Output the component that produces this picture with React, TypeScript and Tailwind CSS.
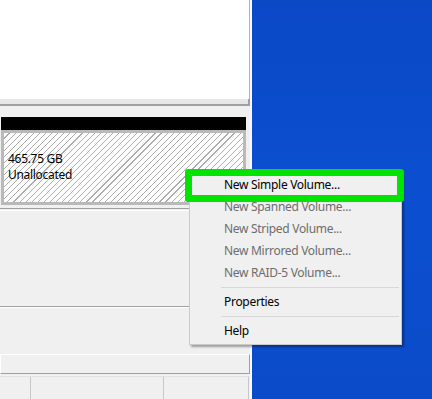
import React from 'react'

const items = [
  { label: 'New Simple Volume...', disabled: false },
  { label: 'New Spanned Volume...', disabled: true },
  { label: 'New Striped Volume...', disabled: true },
  { label: 'New Mirrored Volume...', disabled: true },
  { label: 'New RAID-5 Volume...', disabled: true },
]

const MenuItem = ({ label, disabled }: { label: string; disabled?: boolean }) => (
  <div className={`h-[22px] flex items-center pl-[34px] ${disabled ? 'text-[#6d6d6d]' : 'text-black'}`}>{label}</div>
)

const Separator = () => (
  <div className="h-[7px] flex items-center pl-[31px] pr-[2px]">
    <div className="w-full h-px bg-[#d7d7d7]" />
  </div>
)

const App = () => {
  return (
    <div className="relative w-[432px] h-[399px] flex overflow-hidden font-['Noto_Sans',sans-serif] text-[12px] tracking-[-0.3px]">
      <div className="w-[252px] h-full flex flex-col bg-[#f0f0f0] border-r-2 border-[#fafafa]">
        <div className="h-[99px] bg-white border-r border-[#b0b0b0]" />
        <div className="h-[7px] w-[250px] bg-[#e6e6e6] border-r-2 border-b-2 border-[#a0a0a0]" />
        <div className="h-[11px]" />
        <div className="ml-px w-[245px] h-[13px] bg-black" />
        <div className="ml-px w-[245px] h-[75px] border-[3px] border-[#b9b9b9] bg-white bg-[repeating-linear-gradient(135deg,#ffffff_0px,#ffffff_3.5px,#acacac_3.5px,#acacac_4.3px)] pt-[18px] pl-[4px] leading-[16px] text-black">
          <div>465.75 GB</div>
          <div>Unallocated</div>
        </div>
        <div className="h-[3px]" />
        <div className="w-[250px] h-[3px] border-t border-[#a0a0a0] border-b border-b-white" />
        <div className="h-[95px]" />
        <div className="w-[250px] h-[2px] border-t border-[#a0a0a0] border-b border-b-white" />
        <div className="h-[46px]" />
        <div className="w-[250px] h-[20px] border-t border-l border-white border-r border-b border-r-[#a0a0a0] border-b-[#a0a0a0]" />
        <div className="h-[2px]" />
        <div className="flex-1 flex border-t border-[#e3e3e3]">
          <div className="w-[31px] border-r border-[#c8c8c8]" />
          <div className="w-[133px] border-r border-[#c8c8c8]" />
          <div className="w-[85px] border-r border-[#c8c8c8]" />
        </div>
      </div>
      <div className="flex-1 bg-[linear-gradient(180deg,#0a48c6,#0b4fd0_50%,#0b4bc9)]" />

      <div className="absolute left-[189px] top-[171px] w-[213px] bg-[#f0f0f0] border border-[#cbcbcb] py-[2px] shadow-[2px_2px_2px_rgba(0,0,0,0.35)]">
        {items.map((it) => (
          <MenuItem key={it.label} label={it.label} disabled={it.disabled} />
        ))}
        <Separator />
        <MenuItem label="Properties" />
        <Separator />
        <MenuItem label="Help" />
      </div>

      <div className="absolute left-[185px] top-[169px] w-[219px] h-[33px] border-[7px] border-[#00e400] rounded-[3px]" />
    </div>
  )
}

export default App
